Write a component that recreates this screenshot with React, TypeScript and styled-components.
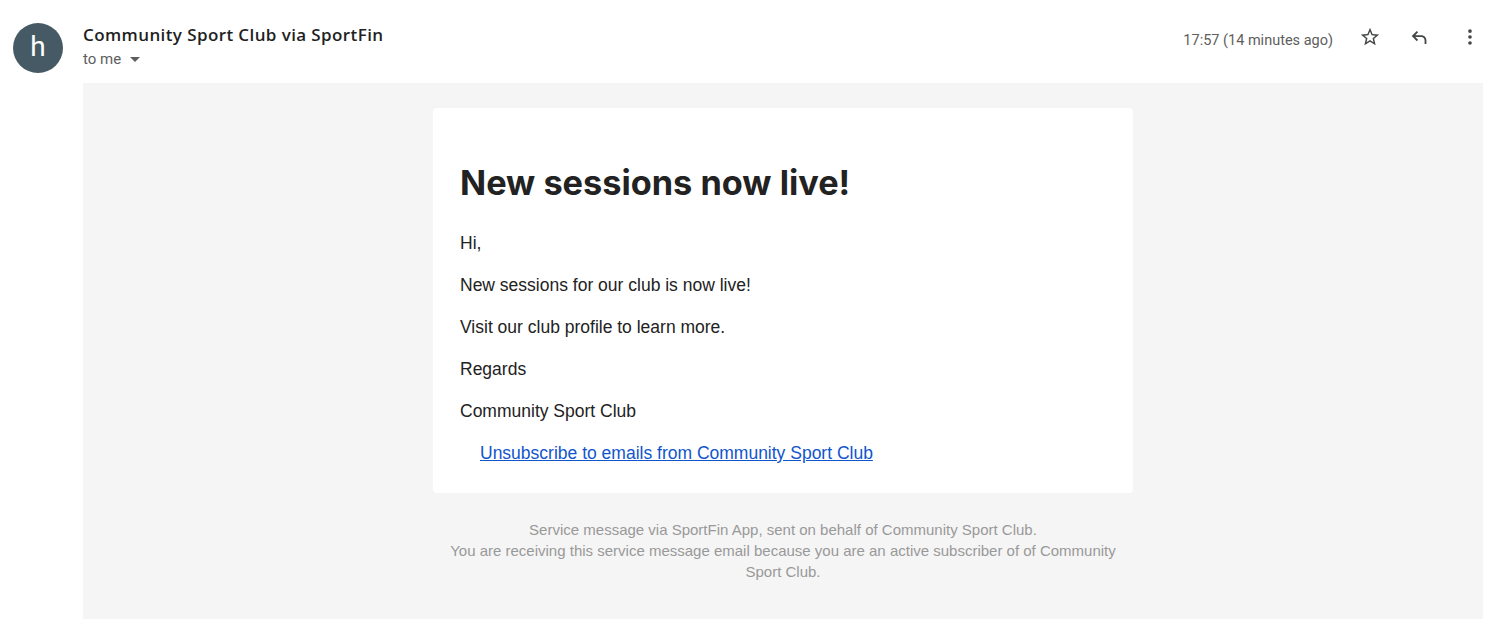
import React from "react";
import styled, { createGlobalStyle } from "styled-components";

const Global = createGlobalStyle`
  html, body { margin: 0; padding: 0; background: #fff; }
  body { font-family: Roboto, Arial, sans-serif; }
`;

const Page = styled.div`
  display: grid;
  grid-template-columns: 50px 1fr;
  column-gap: 20px;
  padding: 23px 20px 21px 13px;
`;

const Avatar = styled.div`
  width: 50px;
  height: 50px;
  border-radius: 50%;
  background: #455a64;
  color: #fff;
  display: flex;
  align-items: center;
  justify-content: center;
  font-family: Roboto, Arial, sans-serif;
  font-size: 28px;
  line-height: 1;
  padding-bottom: 2px;
  box-sizing: border-box;
`;

const Main = styled.div`
  display: flex;
  flex-direction: column;
  min-width: 0;
`;

const HeaderRow = styled.div`
  display: flex;
  justify-content: space-between;
  align-items: flex-start;
  height: 60px;
`;

const SenderBlock = styled.div`
  display: flex;
  flex-direction: column;
`;

const Sender = styled.div`
  font-family: "Open Sans", Roboto, sans-serif;
  font-weight: 600;
  font-size: 17px;
  line-height: 24px;
  color: #1f1f1f;
  letter-spacing: 0.4px;
`;

const ToMe = styled.div`
  display: flex;
  align-items: center;
  gap: 7px;
  margin-top: 2px;
  font-family: Roboto, Arial, sans-serif;
  font-size: 15px;
  line-height: 20px;
  color: #5e5e5e;
`;

const Caret = styled.span`
  width: 0;
  height: 0;
  border-left: 5px solid transparent;
  border-right: 5px solid transparent;
  border-top: 5px solid #5e5e5e;
  margin-left: 2px;
`;

const Actions = styled.div`
  display: flex;
  align-items: center;
  margin-right: -7px;
`;

const Time = styled.span`
  font-family: Roboto, Arial, sans-serif;
  font-size: 14.5px;
  color: #5e5e5e;
  margin-right: 7px;
`;

const IconBtn = styled.button`
  width: 40px;
  height: 40px;
  margin-left: 10px;
  border: 0;
  background: transparent;
  padding: 0;
  display: flex;
  align-items: center;
  justify-content: center;
  color: #444746;
  margin-top: -6px;
`;

const Mail = styled.div`
  background: #f5f5f5;
  display: flex;
  flex-direction: column;
  align-items: center;
  padding: 25px 0 37px;
`;

const Card = styled.div`
  width: 700px;
  box-sizing: border-box;
  background: #fff;
  border-radius: 4px;
  padding: 54px 27px 29px;
`;

const Title = styled.h1`
  margin: 0 0 29px;
  font-family: Inter, "Liberation Sans", Arial, sans-serif;
  font-weight: 700;
  font-size: 34.3px;
  line-height: 42px;
  color: #222;
`;

const P = styled.p`
  margin: 0 0 21px;
  font-family: "Liberation Sans", Arial, sans-serif;
  font-size: 17.5px;
  line-height: 21px;
  color: #222;
`;

const LinkRow = styled.div`
  padding-left: 20px;
  font-family: "Liberation Sans", Arial, sans-serif;
  font-size: 17.5px;
  line-height: 21px;
`;

const Link = styled.a`
  color: #1155cc;
  text-decoration: underline;
`;

const Footer = styled.div`
  width: 700px;
  margin-top: 26px;
  text-align: center;
  font-family: "Liberation Sans", Arial, sans-serif;
  font-size: 15px;
  line-height: 21px;
  color: #999;
`;

const Star = () => (
  <svg width="22" height="22" viewBox="0 0 24 24" fill="currentColor">
    <path d="M22 9.24l-7.19-.62L12 2 9.19 8.63 2 9.24l5.46 4.73L5.82 21 12 17.27 18.18 21l-1.63-7.03L22 9.24zM12 15.4l-3.76 2.27 1-4.28-3.32-2.88 4.38-.38L12 6.1l1.71 4.04 4.38.38-3.32 2.88 1 4.28L12 15.4z" />
  </svg>
);

const Reply = () => (
  <svg width="22" height="22" viewBox="0 0 24 24" fill="currentColor">
    <path d="M19 19.5h-2v-4c0-1.930-1.57-3.5-3.5-3.5H6.83l3.09 3.09L8.5 16.5 3 11l5.5-5.5 1.42 1.41L6.83 10h6.67c3.04 0 5.5 2.46 5.5 5.5v4z" />
  </svg>
);

const More = () => (
  <svg width="22" height="22" viewBox="0 0 24 24" fill="currentColor">
    <circle cx="12" cy="5.5" r="2" />
    <circle cx="12" cy="12" r="2" />
    <circle cx="12" cy="18.5" r="2" />
  </svg>
);

export default function App() {
  return (
    <>
      <Global />
      <Page>
        <Avatar>h</Avatar>
        <Main>
          <HeaderRow>
            <SenderBlock>
              <Sender>Community Sport Club via SportFin</Sender>
              <ToMe>
                to me <Caret />
              </ToMe>
            </SenderBlock>
            <Actions>
              <Time>17:57 (14 minutes ago)</Time>
              <IconBtn aria-label="Star"><Star /></IconBtn>
              <IconBtn aria-label="Reply"><Reply /></IconBtn>
              <IconBtn aria-label="More"><More /></IconBtn>
            </Actions>
          </HeaderRow>
          <Mail>
            <Card>
              <Title>New sessions now live!</Title>
              <P>Hi,</P>
              <P>New sessions for our club is now live!</P>
              <P>Visit our club profile to learn more.</P>
              <P>Regards</P>
              <P>Community Sport Club</P>
              <LinkRow>
                <Link href="#">Unsubscribe to emails from Community Sport Club</Link>
              </LinkRow>
            </Card>
            <Footer>
              Service message via SportFin App, sent on behalf of Community Sport Club.
              <br />
              You are receiving this service message email because you are an active subscriber of of Community Sport Club.
            </Footer>
          </Mail>
        </Main>
      </Page>
    </>
  );
}
